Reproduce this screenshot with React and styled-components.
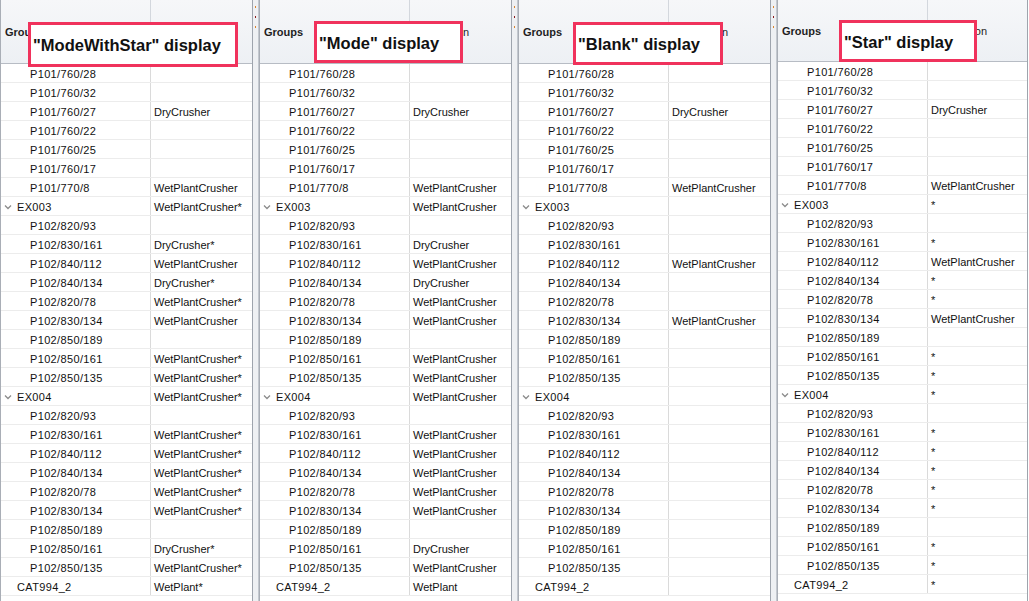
import React from 'react'
import styled, { createGlobalStyle } from 'styled-components'

const GlobalStyle = createGlobalStyle`
  html, body { margin: 0; padding: 0; background: #fff; }
  body { font-family: "Liberation Sans", Arial, sans-serif; }
`

// tree rows, value = the ModeWithStar text
const rows = [
  { name: 'P101/760/28', level: 1, value: '' },
  { name: 'P101/760/32', level: 1, value: '' },
  { name: 'P101/760/27', level: 1, value: 'DryCrusher' },
  { name: 'P101/760/22', level: 1, value: '' },
  { name: 'P101/760/25', level: 1, value: '' },
  { name: 'P101/760/17', level: 1, value: '' },
  { name: 'P101/770/8', level: 1, value: 'WetPlantCrusher' },
  { name: 'EX003', level: 0, group: true, value: 'WetPlantCrusher*' },
  { name: 'P102/820/93', level: 1, value: '' },
  { name: 'P102/830/161', level: 1, value: 'DryCrusher*' },
  { name: 'P102/840/112', level: 1, value: 'WetPlantCrusher' },
  { name: 'P102/840/134', level: 1, value: 'DryCrusher*' },
  { name: 'P102/820/78', level: 1, value: 'WetPlantCrusher*' },
  { name: 'P102/830/134', level: 1, value: 'WetPlantCrusher' },
  { name: 'P102/850/189', level: 1, value: '' },
  { name: 'P102/850/161', level: 1, value: 'WetPlantCrusher*' },
  { name: 'P102/850/135', level: 1, value: 'WetPlantCrusher*' },
  { name: 'EX004', level: 0, group: true, value: 'WetPlantCrusher*' },
  { name: 'P102/820/93', level: 1, value: '' },
  { name: 'P102/830/161', level: 1, value: 'WetPlantCrusher*' },
  { name: 'P102/840/112', level: 1, value: 'WetPlantCrusher*' },
  { name: 'P102/840/134', level: 1, value: 'WetPlantCrusher*' },
  { name: 'P102/820/78', level: 1, value: 'WetPlantCrusher*' },
  { name: 'P102/830/134', level: 1, value: 'WetPlantCrusher*' },
  { name: 'P102/850/189', level: 1, value: '' },
  { name: 'P102/850/161', level: 1, value: 'DryCrusher*' },
  { name: 'P102/850/135', level: 1, value: 'WetPlantCrusher*' },
  { name: 'CAT994_2', level: 0, value: 'WetPlant*' },
]

const display = (mode, v) => {
  const star = v.endsWith('*')
  if (mode === 'ModeWithStar') return v
  if (mode === 'Mode') return v.replace('*', '')
  if (mode === 'Blank') return star ? '' : v
  return star ? '*' : v
}

const panels = [
  { mode: 'ModeWithStar', box: { left: 27, top: 22, width: 210, height: 45 } },
  { mode: 'Mode', box: { left: 54, top: 21, width: 149, height: 42 } },
  { mode: 'Blank', box: { left: 54, top: 22, width: 150, height: 43 } },
  { mode: 'Star', box: { left: 61, top: 20, width: 138, height: 42 }, head: 62, width: 251 },
]

const Chevron = () => (
  <svg width="8" height="6" viewBox="0 0 8 6">
    <path d="M1 1.5 L4 4.5 L7 1.5" fill="none" stroke="#8c8c8c" strokeWidth="1.3" />
  </svg>
)

const App = () => {
  return (
    <Page>
      <GlobalStyle />
      {panels.map((p, i) => (
        <React.Fragment key={p.mode}>
          {i > 0 && (
            <Splitter>
              <Grip $c="#d9822b" />
              <Grip $c="#8b1a1a" />
              <Grip $c="#d9822b" />
            </Splitter>
          )}
          <Panel $w={p.width || 253}>
            <Header $h={p.head || 64}>
              <HeadCell $bold>Groups</HeadCell>
              <HeadCell>Description</HeadCell>
            </Header>
            <Body>
              {rows.map((r, idx) => (
                <Row key={idx}>
                  <NameCell $level={r.level}>
                    {r.group && (
                      <Toggle>
                        <Chevron />
                      </Toggle>
                    )}
                    {r.name}
                  </NameCell>
                  <ValueCell>{display(p.mode, r.value)}</ValueCell>
                </Row>
              ))}
            </Body>
            <Label style={p.box}>"{p.mode}" display</Label>
          </Panel>
        </React.Fragment>
      ))}
    </Page>
  )
}

export default App

const Page = styled.div`
  display: flex;
  width: 1029px;
  height: 601px;
  overflow: hidden;
  background: #fff;
`
const Panel = styled.div`
  position: relative;
  width: ${p => p.$w}px;
  flex-shrink: 0;
  box-sizing: border-box;
  border-left: 1px solid #a9aeb6;
  border-right: 1px solid #9ea4ad;
  display: flex;
  flex-direction: column;
`
const Splitter = styled.div`
  width: 6px;
  flex-shrink: 0;
  box-sizing: border-box;
  background: #eef0f3;
  border-right: 1px solid #c3c8cf;
  display: flex;
  flex-direction: column;
  align-items: center;
  gap: 8px;
  padding-top: 6px;
`
const Grip = styled.span`
  width: 1px;
  height: 2px;
  background: ${p => p.$c};
`
const Header = styled.div`
  display: grid;
  grid-template-columns: 150px 1fr;
  height: ${p => p.$h}px;
  box-sizing: border-box;
  background: linear-gradient(#f6f7f9, #edf0f4);
  border-bottom: 1px solid #b7bcc4;
`
const HeadCell = styled.div`
  display: flex;
  align-items: center;
  padding-left: 4px;
  font-size: 11px;
  font-weight: ${p => (p.$bold ? 700 : 400)};
  color: #1f1f1f;
  border-right: 1px solid #d3d7dd;
  &:last-child { border-right: none; }
`
const Body = styled.div`
  display: flex;
  flex-direction: column;
`
const Row = styled.div`
  display: grid;
  grid-template-columns: 150px 1fr;
  height: 19px;
  box-sizing: border-box;
  border-bottom: 1px solid #ececec;
  font-size: 11px;
  color: #111;
`
const NameCell = styled.div`
  position: relative;
  display: flex;
  align-items: center;
  padding-left: ${p => (p.$level ? 29 : 16)}px;
  border-right: 1px solid #dadada;
  white-space: nowrap;
  letter-spacing: 0.35px;
  padding-top: 1px;
`
const Toggle = styled.span`
  position: absolute;
  left: 3px;
  top: 7px;
  display: flex;
`
const ValueCell = styled.div`
  display: flex;
  align-items: center;
  padding-left: 3px;
  padding-top: 1px;
  white-space: nowrap;
`
const Label = styled.div`
  position: absolute;
  box-sizing: border-box;
  background: #fff;
  border: 3px solid #f0325c;
  display: flex;
  align-items: center;
  padding-left: 2px;
  padding-top: 2px;
  font-family: "Liberation Sans", Arial, sans-serif;
  font-weight: 700;
  font-size: 16.5px;
  color: #111;
  white-space: nowrap;
`
